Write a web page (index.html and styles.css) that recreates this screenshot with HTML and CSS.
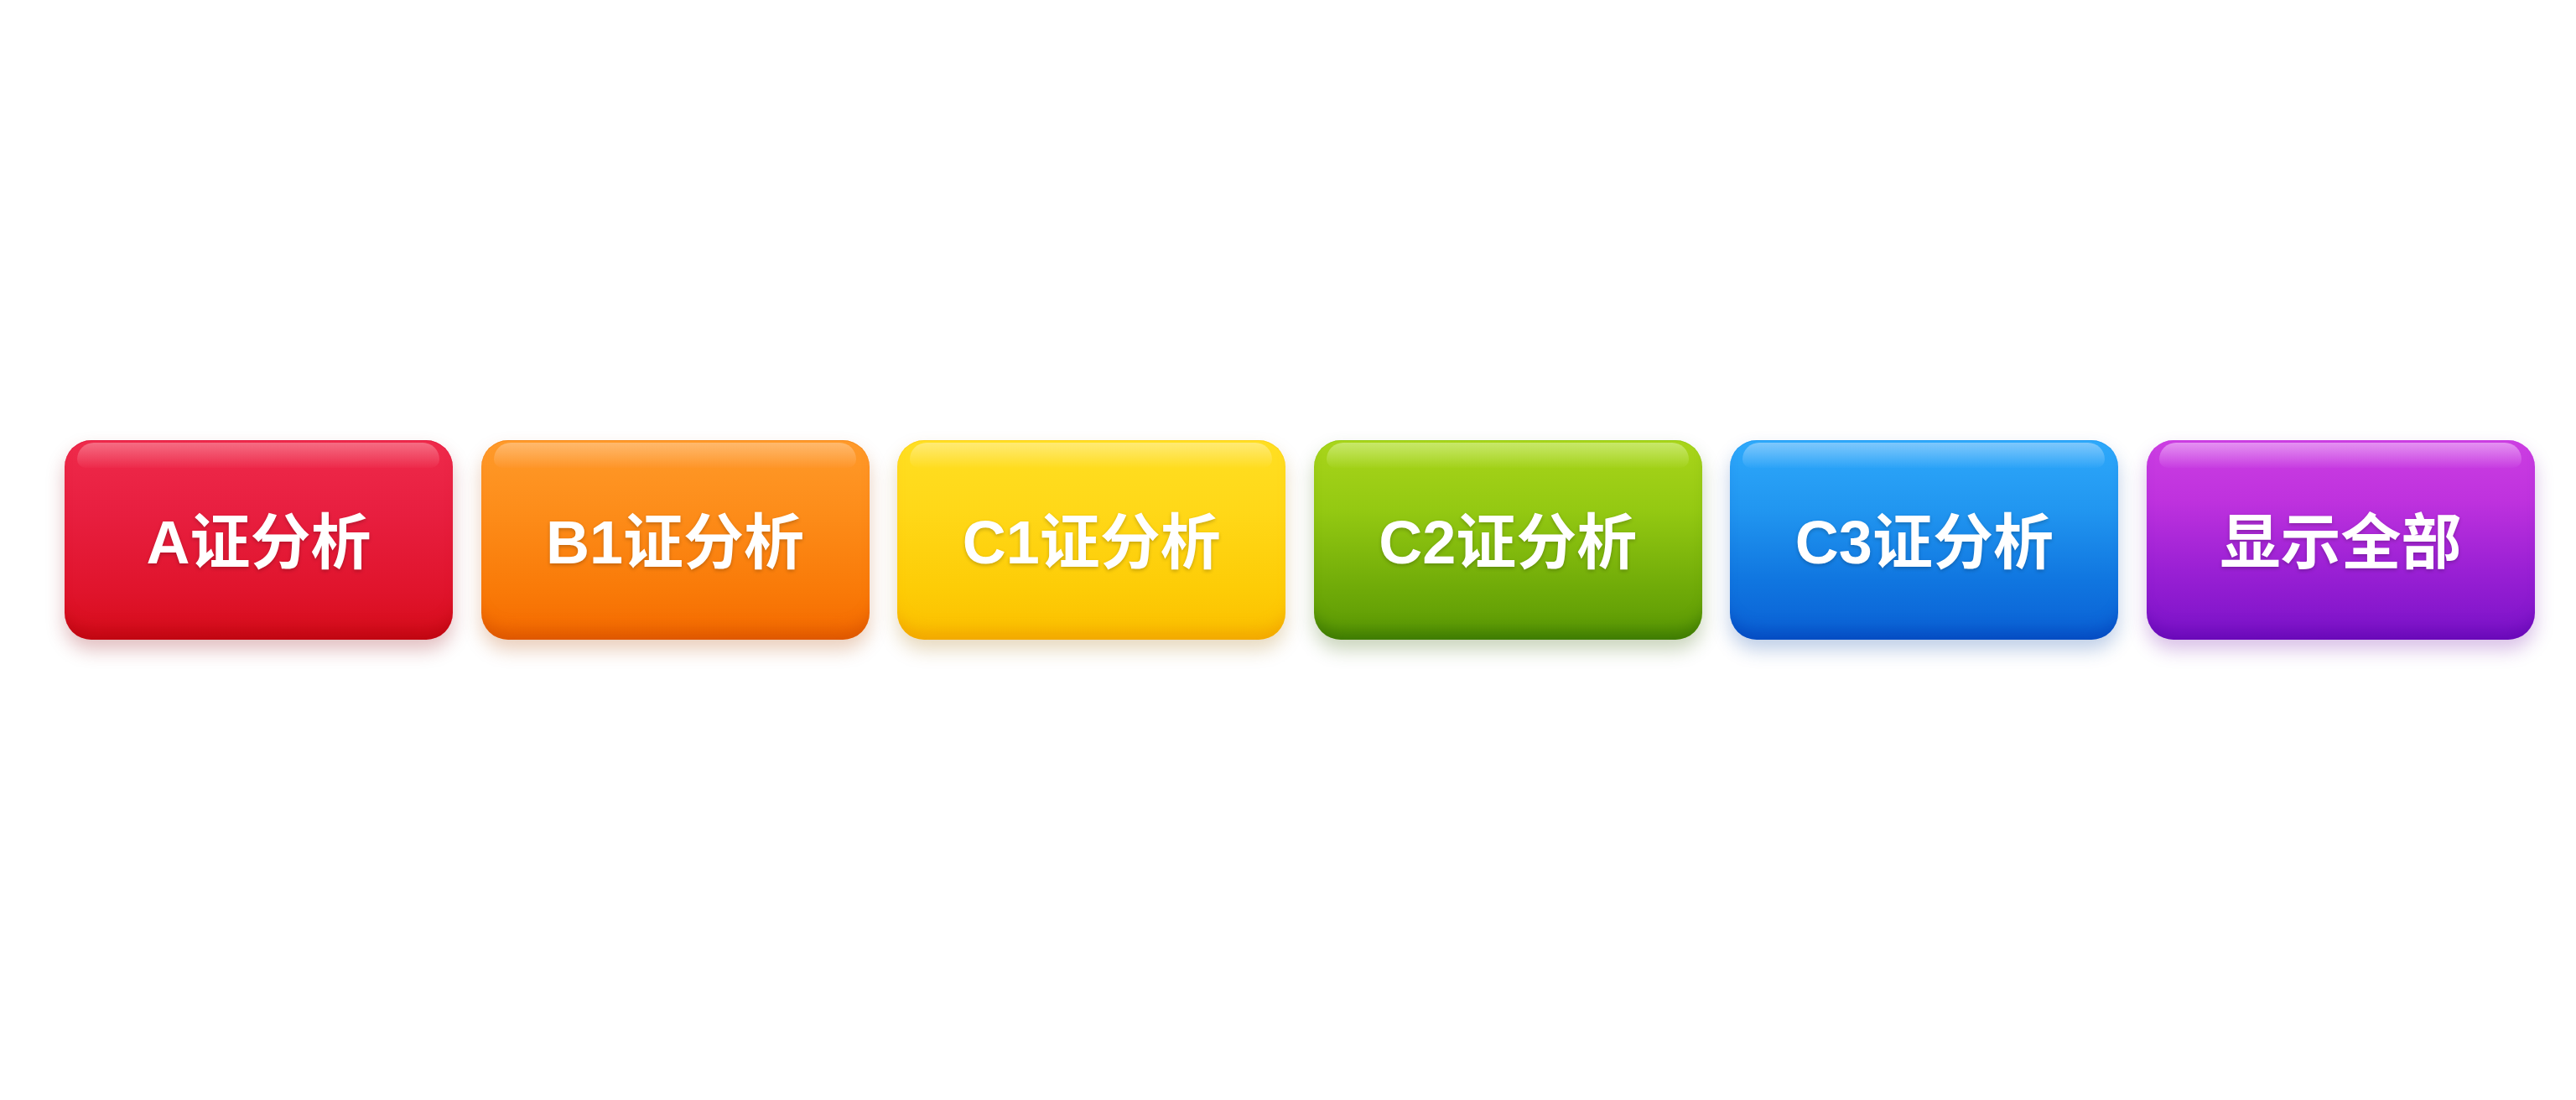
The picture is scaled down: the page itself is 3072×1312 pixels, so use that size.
FILE: index.html
```html
<!DOCTYPE html>
<html lang="zh-CN">
<head>
<meta charset="utf-8">
<title>证分析</title>
<link rel="stylesheet" href="styles.css">
</head>
<body>
<div class="bar">
  <button class="btn red">A证分析</button>
  <button class="btn orange">B1证分析</button>
  <button class="btn yellow">C1证分析</button>
  <button class="btn green">C2证分析</button>
  <button class="btn blue">C3证分析</button>
  <button class="btn purple">显示全部</button>
</div>
</body>
</html>
```
FILE: styles.css
```css
html, body {
  margin: 0;
  padding: 0;
  background: #ffffff;
}
body {
  width: 3072px;
  height: 1312px;
  overflow: hidden;
}
.bar {
  display: flex;
  gap: 33.6px;
  padding: 525px 0 0 77px;
}
.btn {
  position: relative;
  flex: 0 0 auto;
  width: 463px;
  height: 238px;
  border: none;
  border-radius: 32px;
  padding: 5px 0 0 0;
  margin: 0;
  display: flex;
  align-items: center;
  justify-content: center;
  color: #ffffff;
  font-family: "Liberation Sans", "Noto Sans CJK SC", sans-serif;
  font-weight: 700;
  font-size: 72px;
  line-height: 1;
  letter-spacing: 0;
  text-shadow: 0 2px 4px rgba(0, 0, 0, 0.22);
  cursor: pointer;
}
.btn::before {
  content: "";
  position: absolute;
  left: 15px;
  right: 16px;
  top: 3px;
  height: 30px;
  border-radius: 28px 28px 14px 14px;
  background: linear-gradient(to bottom, var(--hl) 0%, var(--hl2) 100%);
  opacity: 0.9;
}
.red {
  --hl: rgba(246, 120, 140, 0.95);
  --hl2: rgba(240, 60, 90, 0.2);
  background: linear-gradient(to bottom, #ef2a4b 0%, #e81f40 35%, #e0142c 75%, #d60c1a 100%);
  box-shadow: inset 0 -22px 18px -12px rgba(170, 0, 10, 0.55), inset 0 1px 0 rgba(220, 20, 60, 0.6), 0 12px 22px rgba(150, 20, 30, 0.28);
}
.orange {
  --hl: rgba(255, 190, 120, 0.95);
  --hl2: rgba(255, 150, 60, 0.2);
  background: linear-gradient(to bottom, #ff9a2a 0%, #fd8d1a 35%, #f97a08 75%, #f46a00 100%);
  box-shadow: inset 0 -22px 18px -12px rgba(200, 70, 0, 0.55), inset 0 1px 0 rgba(240, 130, 20, 0.6), 0 12px 22px rgba(180, 80, 10, 0.28);
}
.yellow {
  --hl: rgba(255, 236, 130, 0.95);
  --hl2: rgba(255, 220, 40, 0.2);
  background: linear-gradient(to bottom, #ffdf22 0%, #ffd818 35%, #fdcc06 75%, #fbbf00 100%);
  box-shadow: inset 0 -22px 18px -12px rgba(235, 150, 0, 0.6), inset 0 1px 0 rgba(250, 200, 20, 0.6), 0 12px 22px rgba(170, 120, 20, 0.28);
}
.green {
  --hl: rgba(205, 235, 120, 0.95);
  --hl2: rgba(170, 215, 40, 0.2);
  background: linear-gradient(to bottom, #a9d51a 0%, #94c912 35%, #6faa08 75%, #5a9804 100%);
  box-shadow: inset 0 -22px 18px -12px rgba(40, 100, 0, 0.6), inset 0 1px 0 rgba(140, 200, 20, 0.6), 0 12px 22px rgba(60, 100, 10, 0.28);
}
.blue {
  --hl: rgba(140, 205, 252, 0.95);
  --hl2: rgba(60, 170, 250, 0.2);
  background: linear-gradient(to bottom, #2ea9fb 0%, #2196f0 35%, #1076e0 70%, #0a60d4 100%);
  box-shadow: inset 0 -22px 18px -12px rgba(0, 60, 180, 0.6), inset 0 1px 0 rgba(30, 150, 240, 0.6), 0 12px 22px rgba(20, 80, 170, 0.28);
}
.purple {
  --hl: rgba(232, 160, 244, 0.95);
  --hl2: rgba(205, 80, 230, 0.2);
  background: linear-gradient(to bottom, #cc3ee2 0%, #bf32de 30%, #9a20d4 65%, #7a12c8 100%);
  box-shadow: inset 0 -22px 18px -12px rgba(90, 0, 170, 0.55), inset 0 1px 0 rgba(200, 60, 225, 0.6), 0 12px 22px rgba(120, 30, 170, 0.28);
}
```
